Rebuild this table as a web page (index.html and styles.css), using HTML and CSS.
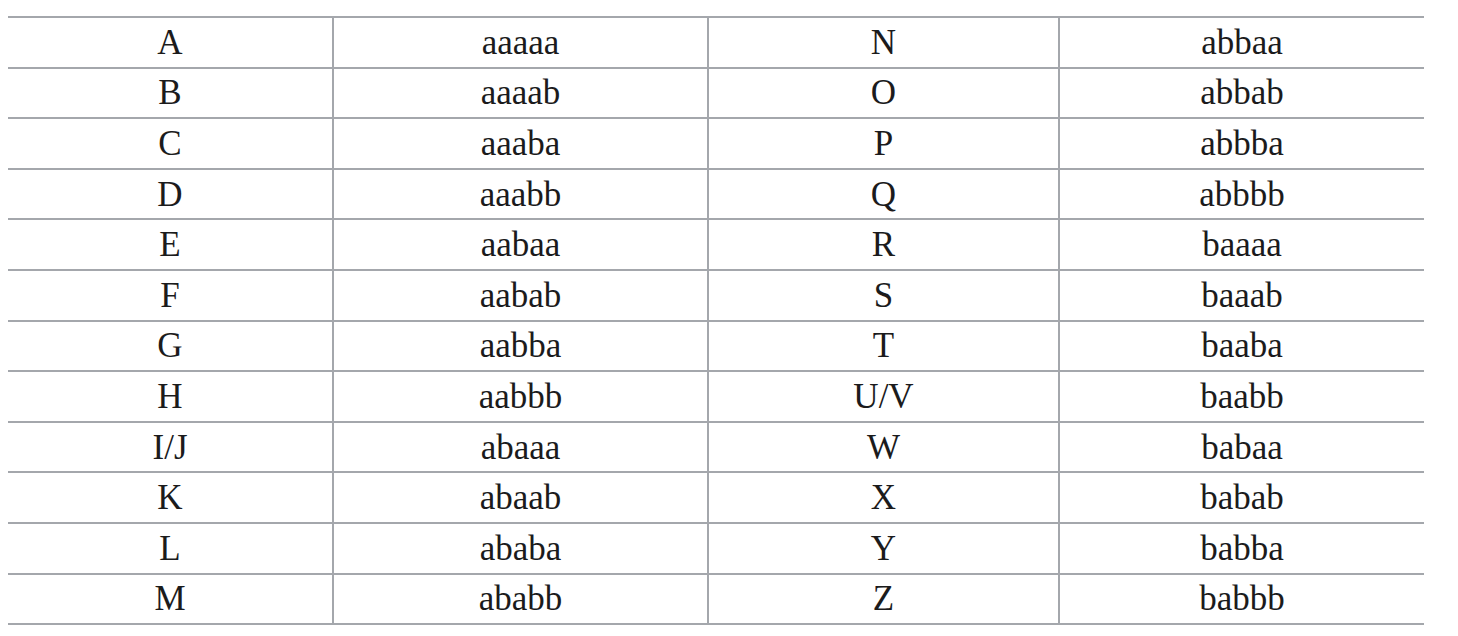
FILE: index.html
```html
<!DOCTYPE html>
<html>
<head>
<meta charset="utf-8">
<link rel="stylesheet" href="styles.css">
</head>
<body>
<div class="wrap">
<table class="code">
<colgroup><col class="c1"><col class="c2"><col class="c3"><col class="c4"></colgroup>
<tbody>
<tr><td>A</td><td>aaaaa</td><td>N</td><td>abbaa</td></tr>
<tr><td>B</td><td>aaaab</td><td>O</td><td>abbab</td></tr>
<tr><td>C</td><td>aaaba</td><td>P</td><td>abbba</td></tr>
<tr><td>D</td><td>aaabb</td><td>Q</td><td>abbbb</td></tr>
<tr><td>E</td><td>aabaa</td><td>R</td><td>baaaa</td></tr>
<tr><td>F</td><td>aabab</td><td>S</td><td>baaab</td></tr>
<tr><td>G</td><td>aabba</td><td>T</td><td>baaba</td></tr>
<tr><td>H</td><td>aabbb</td><td>U/V</td><td>baabb</td></tr>
<tr><td>I/J</td><td>abaaa</td><td>W</td><td>babaa</td></tr>
<tr><td>K</td><td>abaab</td><td>X</td><td>babab</td></tr>
<tr><td>L</td><td>ababa</td><td>Y</td><td>babba</td></tr>
<tr><td>M</td><td>ababb</td><td>Z</td><td>babbb</td></tr>
</tbody>
</table>
</div>
</body>
</html>
```
FILE: styles.css
```css
html, body {
  margin: 0;
  padding: 0;
  background: #fff;
}
.wrap {
  padding: 16px 0 0 8px;
}
.code {
  border-collapse: collapse;
  table-layout: fixed;
  width: 1416px;
  font-family: "Liberation Serif", "Times New Roman", serif;
  font-size: 35px;
  color: #1b1b1c;
}
.c1 { width: 325px; }
.c2 { width: 375px; }
.c3 { width: 351px; }
.c4 { width: 365px; }
.code td {
  border: 2px solid #a4a7ac;
  border-left: none;
  border-right: none;
  height: 48.6px;
  padding: 0;
  text-align: center;
  vertical-align: middle;
  line-height: 1;
}
.code td + td {
  border-left: 2px solid #a4a7ac;
}
```
